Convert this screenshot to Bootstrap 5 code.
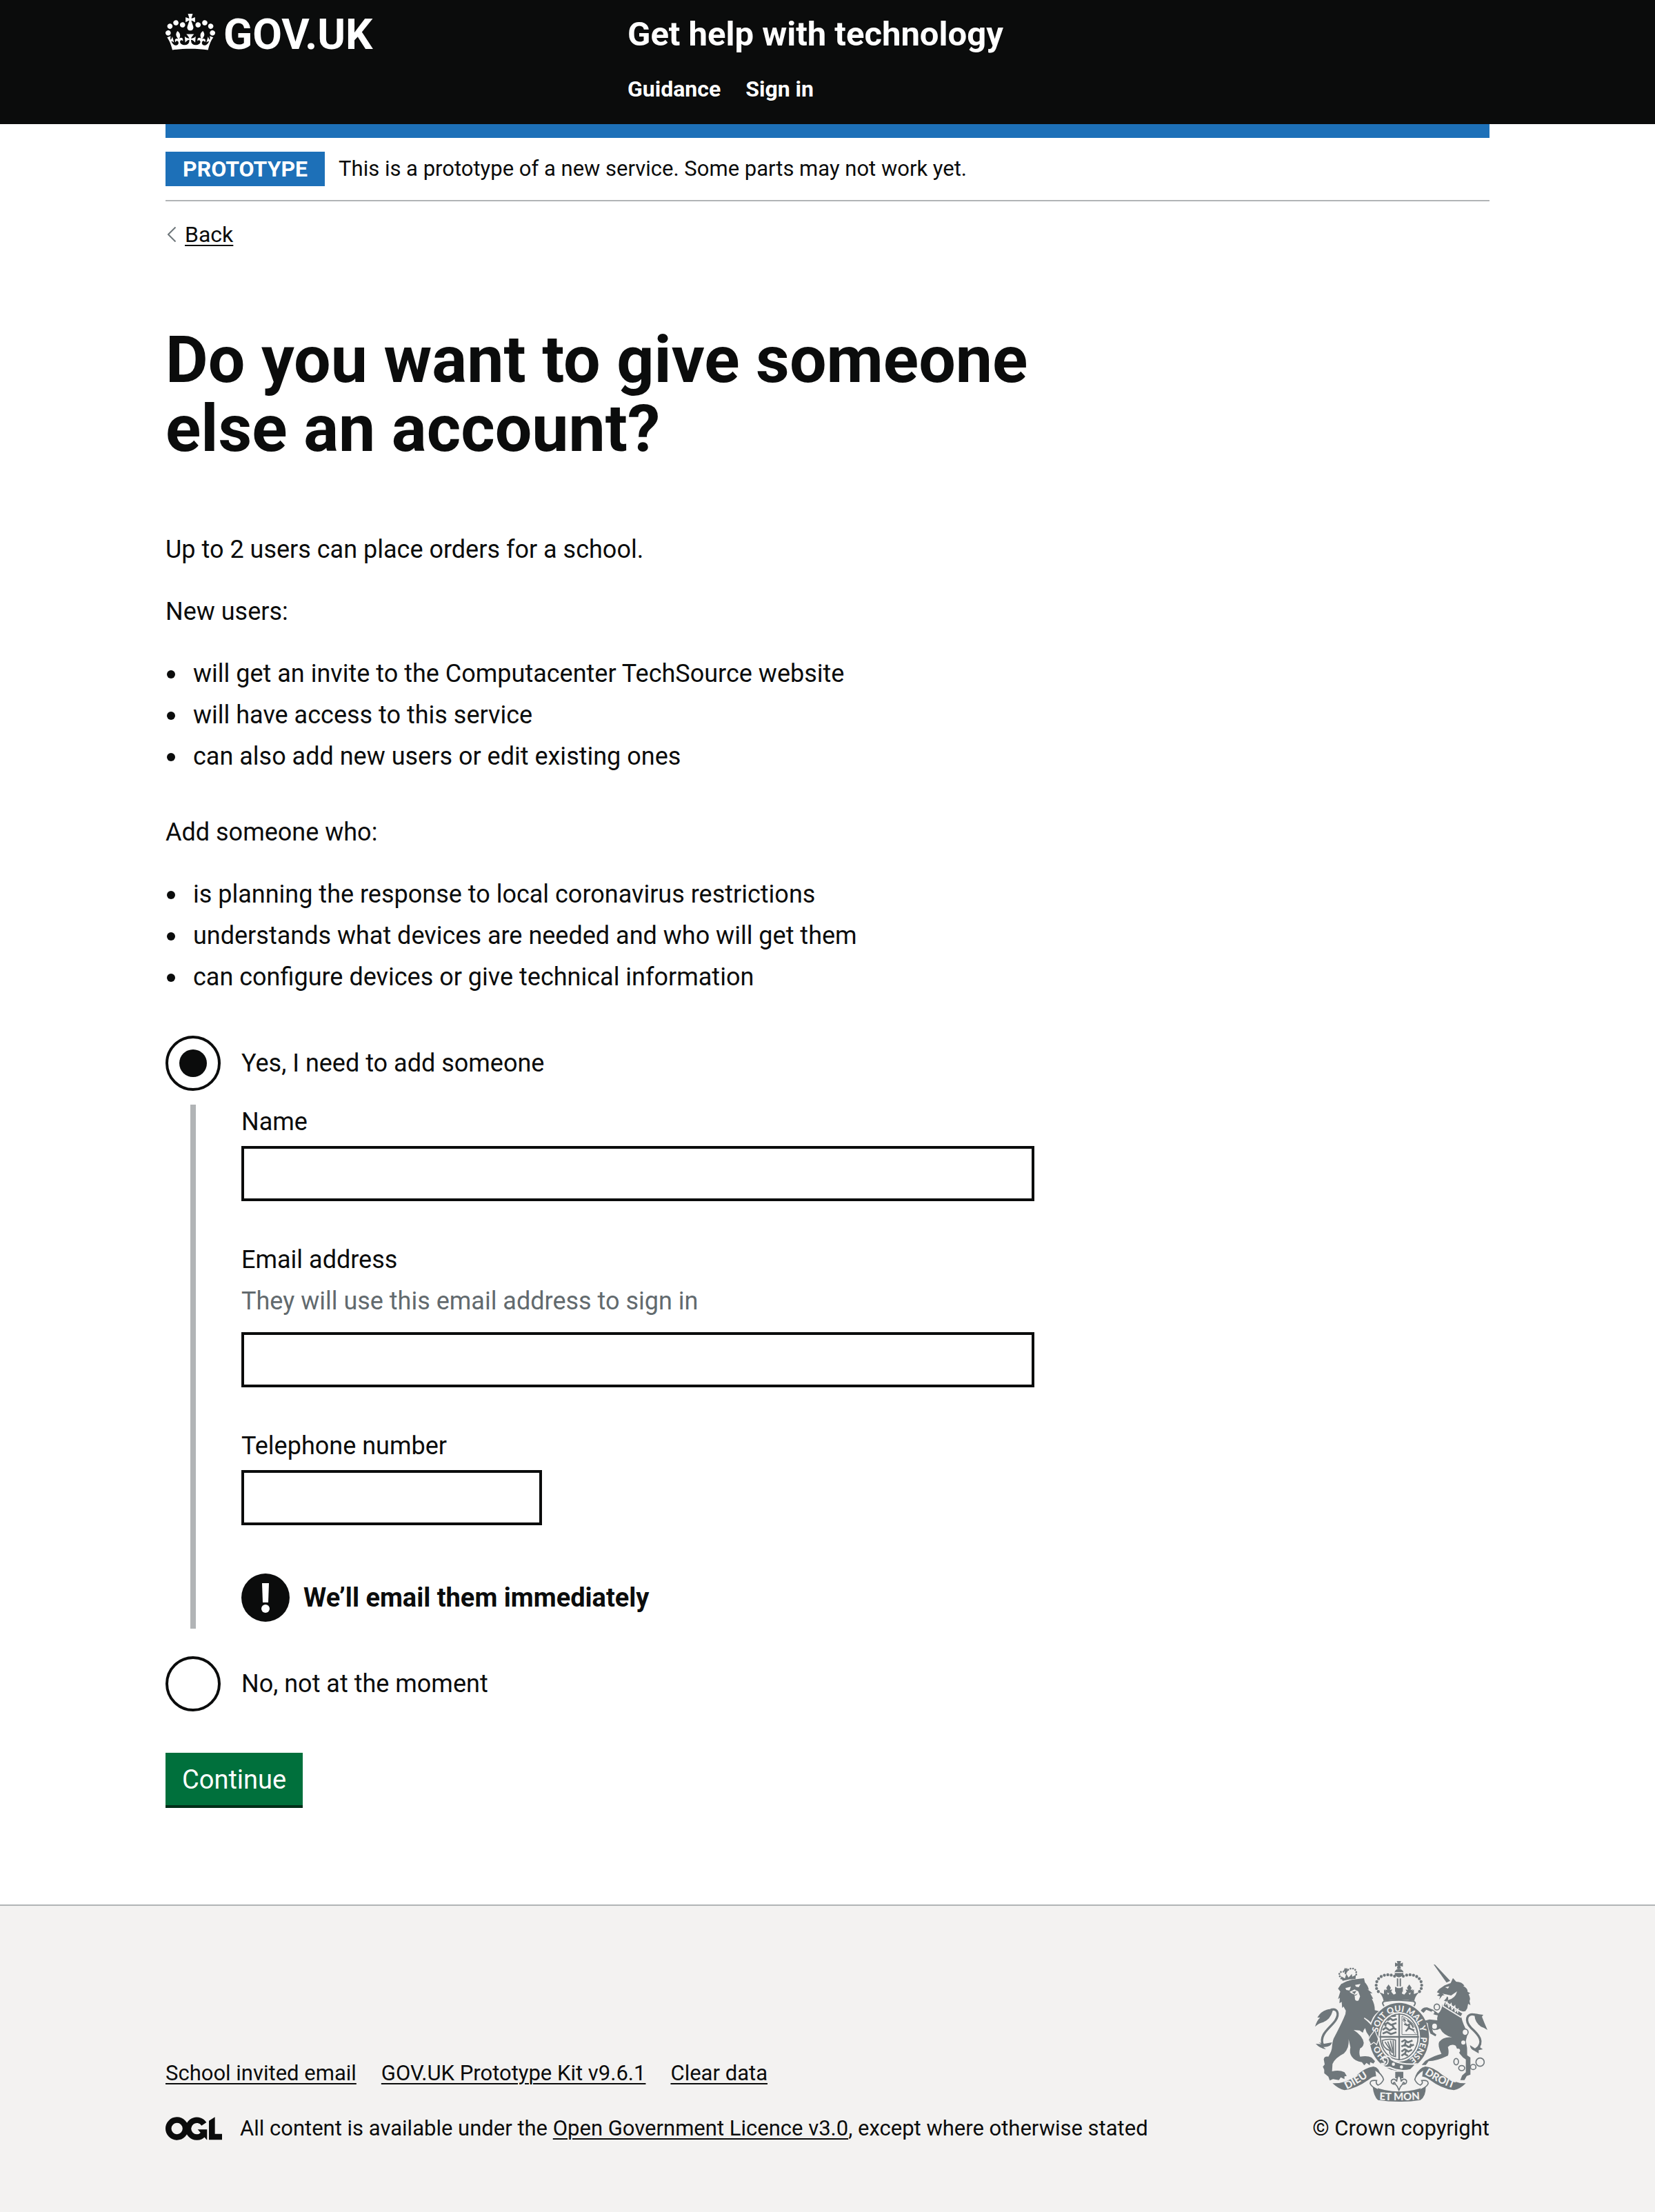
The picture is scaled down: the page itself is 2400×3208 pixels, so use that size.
<!DOCTYPE html>
<html lang="en">
<head>
<meta charset="utf-8">
<meta name="viewport" content="width=device-width, initial-scale=1">
<title>Do you want to give someone else an account? - Get help with technology</title>
<link href="https://cdn.jsdelivr.net/npm/bootstrap@5.3.0/dist/css/bootstrap.min.css" rel="stylesheet">
<style>
:root { --ink: #0b0c0c; --line: #b1b4b6; --brand: #1d70b8; --crest: #6f777b; --paper: #f3f2f1; }
body { font-family: Roboto, "Liberation Sans", sans-serif; font-size: 36px; line-height: 50px; color: var(--ink); background: var(--paper); }
a { color: var(--ink); text-underline-offset: 4px; text-decoration-thickness: 2px; }
a:hover { color: #003078; }
.page-width { width: 80%; margin-inline: auto; }
.small-type { font-size: 31px; line-height: 40px; }
.nav-type { font-size: 32px; line-height: 40px; }
.site-header { background: var(--ink); padding: 20px 0 31px; }
.site-header a { color: #fff; text-decoration: none; }
.logo-link { font-size: 62px; line-height: 60px; gap: 12px; }
.service-col { padding-left: 30px; }
.service-name { font-size: 49px; line-height: 60px; }
.site-nav { margin-top: 29px; gap: 36px; }
.brand-bar { height: 20px; background: var(--brand); }
.phase-banner { padding: 20px 0; gap: 20px; border-bottom: 2px solid var(--line); }
.phase-tag { background: var(--brand); padding: 5px 25px; }
.back-link { margin-top: 28px; gap: 13px; padding-left: 3px; }
.main-row { --bs-gutter-x: 60px; }
h1 { font-size: 95px; line-height: 100px; margin: 112px 0 100px; }
main p { margin-bottom: 40px; }
.bullets { margin-bottom: 60px; }
.bullets li { display: flex; margin-bottom: 10px; }
.bullets li::before { content: ""; flex: none; width: 12px; height: 12px; margin: 20px 26px 0 2px; border-radius: 50%; background: var(--ink); }
.bullets li:last-child { margin-bottom: 0; }
.choice { gap: 30px; }
.choice .form-check-input { width: 80px; height: 80px; margin: 0; flex: none; border: 4px solid var(--ink); background-color: #fff; }
.choice .form-check-input:checked { background-color: #fff; background-size: contain; background-image: url("data:image/svg+xml,%3Csvg xmlns='http://www.w3.org/2000/svg' viewBox='0 0 72 72'%3E%3Ccircle cx='36' cy='36' r='20' fill='%230b0c0c'/%3E%3C/svg%3E"); }
.conditional { margin: 20px 0 40px 36px; padding-left: 66px; border-left: 8px solid var(--line); }
.field { margin-bottom: 60px; }
.field .form-label { margin-bottom: 10px; }
.field .form-text { font-size: 36px; margin: 0 0 20px; color: #626a6e; }
.field .form-control { height: 80px; border: 4px solid var(--ink); border-radius: 0; font-size: 36px; padding: 10px; }
.field .tel-input { width: 436px; }
.warning-text { padding: 10px 0; gap: 20px; font-size: 38px; }
.btn-continue { --bs-btn-color: #fff; --bs-btn-bg: #00703c; --bs-btn-hover-color: #fff; --bs-btn-hover-bg: #005a30; margin-top: 60px; padding: 14px 24px 12px; border: 0; border-radius: 0; font-size: 38px; line-height: 50px; box-shadow: 0 4px 0 #002d18; }
.page-main { padding-bottom: 144px; }
.site-footer { border-top: 2px solid var(--line); padding: 80px 0 100px; }
.footer-links { gap: 36px; margin-bottom: 40px; }
.licence { gap: 26px; }
.crest-link { text-decoration: none; gap: 19px; }
.crest-word { font-family: Lato, Roboto, sans-serif; font-weight: 900; fill: var(--paper); }
</style>
</head>
<body>
<header class="site-header">
  <div class="page-width">
    <div class="row g-0">
      <div class="col-4">
        <a href="#" class="logo-link d-inline-flex align-items-start fw-bold">
          <svg width="72" height="53" viewBox="0 0 132 97" aria-hidden="true"><path fill="#fff" fill-rule="evenodd" d="M25 30.2c3.5 1.5 7.7-.2 9.1-3.7 1.5-3.6-.2-7.8-3.9-9.2-3.6-1.4-7.6.3-9.1 3.9-1.4 3.5.3 7.5 3.9 9zM9 39.5c3.6 1.5 7.8-.2 9.2-3.7 1.5-3.6-.2-7.8-3.9-9.1-3.6-1.5-7.6.2-9.1 3.8-1.4 3.5.3 7.5 3.8 9zM4.4 57.2c3.5 1.5 7.7-.2 9.1-3.8 1.5-3.6-.2-7.7-3.9-9.1-3.5-1.5-7.6.3-9.1 3.8-1.4 3.5.3 7.6 3.9 9.1zm38.3-21.4c3.5 1.5 7.7-.2 9.1-3.8 1.5-3.6-.2-7.7-3.9-9.1-3.6-1.5-7.6.3-9.1 3.8-1.3 3.6.4 7.7 3.9 9.1zm64.4-5.6c-3.6 1.5-7.8-.2-9.1-3.7-1.5-3.6.2-7.8 3.8-9.2 3.6-1.4 7.7.3 9.2 3.9 1.3 3.5-.4 7.5-3.9 9zm15.9 9.3c-3.6 1.5-7.7-.2-9.1-3.7-1.5-3.6.2-7.8 3.7-9.1 3.6-1.5 7.7.2 9.2 3.8 1.5 3.5-.3 7.5-3.8 9zm4.7 17.7c-3.6 1.5-7.8-.2-9.2-3.8-1.5-3.6.2-7.7 3.9-9.1 3.6-1.5 7.7.3 9.2 3.8 1.3 3.5-.4 7.6-3.9 9.1zM89.3 35.8c-3.6 1.5-7.8-.2-9.2-3.8-1.4-3.6.2-7.7 3.9-9.1 3.6-1.5 7.7.3 9.2 3.8 1.4 3.6-.3 7.7-3.9 9.1zM69.7 17.7l8.9 4.7V9.3l-8.9 2.8c-.2-.3-.5-.6-.9-.9L72.4 0H59.6l3.5 11.2c-.3.3-.6.5-.9.9l-8.8-2.8v13.1l8.8-4.7c.3.3.6.7.9.9l-5 15.4v.1c-.2.8-.4 1.6-.4 2.4 0 4.1 3.1 7.5 7 8.1h.2c.3 0 .7.1 1 .1.4 0 .7 0 1-.1h.2c4-.6 7.1-4.1 7.1-8.1 0-.8-.1-1.7-.4-2.4V34l-5.1-15.4c.4-.2.7-.6 1-.9zM66 92.8c16.9 0 32.8 1.1 47.1 3.2 4-16.9 8.9-26.7 14-33.5l-9.6-3.4c1 4.9 1.1 7.2 0 10.2-1.5-1.4-3-4.3-4.2-8.7L108.6 76c2.8-2 5-3.2 7.5-3.3-4.4 9.4-10 11.9-13.6 11.2-4.3-.8-6.3-4.6-5.6-7.9 1-4.7 5.7-5.9 8-.5 4.3-8.7-3-11.4-7.6-8.8 7.1-7.2 7.9-13.5 2.1-21.1-8 6.1-8.1 12.3-4.5 20.8-4.7-5.4-12.1-2.5-9.5 6.2 3.4-5.2 7.9-2 7.2 3.1-.6 4.3-6.4 7.8-13.5 7.2-10.3-.9-10.9-8-11.2-13.8 2.5-.5 7.1 1.8 11 7.3L80.2 60c-4.1 4.4-8 5.3-12.3 5.4 1.4-4.4 8-11.6 8-11.6H55.5s6.4 7.2 7.9 11.6c-4.2-.1-8-1-12.3-5.4l1.4 16.4c3.9-5.5 8.5-7.7 10.9-7.3-.3 5.8-.9 12.8-11.1 13.8-7.2.6-12.9-2.9-13.5-7.2-.7-5 3.8-8.3 7.1-3.1 2.7-8.7-4.6-11.6-9.4-6.2 3.7-8.5 3.6-14.7-4.6-20.8-5.8 7.6-5 13.9 2.2 21.1-4.7-2.6-11.9.1-7.7 8.8 2.3-5.5 7.1-4.2 8.1.5.7 3.3-1.3 7.1-5.7 7.9-3.5.7-9-1.8-13.5-11.2 2.5.1 4.7 1.3 7.5 3.3l-4.7-15.4c-1.2 4.4-2.7 7.2-4.3 8.7-1.1-3-.9-5.3 0-10.2l-9.5 3.4c5 6.9 9.9 16.7 14 33.5 14.8-2.1 30.8-3.2 47.7-3.2z"/></svg>
          <span>GOV.UK</span>
        </a>
      </div>
      <div class="col-8 service-col">
        <a href="#" class="service-name d-block fw-bold">Get help with technology</a>
        <nav class="site-nav nav-type fw-bold d-flex" aria-label="Service">
          <a href="#">Guidance</a>
          <a href="#">Sign in</a>
        </nav>
      </div>
    </div>
  </div>
</header>

<div class="page-main bg-white">
  <div class="page-width">
    <div class="brand-bar"></div>
    <div class="phase-banner small-type d-flex align-items-center">
      <strong class="phase-tag nav-type text-white">PROTOTYPE</strong>
      <span>This is a prototype of a new service. Some parts may not work yet.</span>
    </div>
    <div class="back-link nav-type d-flex align-items-center">
      <svg width="12" height="22" viewBox="0 0 12 22" aria-hidden="true"><path d="M11.5 .5 1 11l10.500 10.500" fill="none" stroke="#6f777b" stroke-width="2"/></svg>
      <a href="#">Back</a>
    </div>

    <main class="row main-row">
      <div class="col-8">
        <h1 class="fw-bold">Do you want to give someone else an account?</h1>
        <p>Up to 2 users can place orders for a school.</p>
        <p>New users:</p>
        <ul class="bullets list-unstyled">
          <li>will get an invite to the Computacenter TechSource website</li>
          <li>will have access to this service</li>
          <li>can also add new users or edit existing ones</li>
        </ul>
        <p>Add someone who:</p>
        <ul class="bullets list-unstyled">
          <li>is planning the response to local coronavirus restrictions</li>
          <li>understands what devices are needed and who will get them</li>
          <li>can configure devices or give technical information</li>
        </ul>

        <form>
          <div class="choice d-flex align-items-center">
            <input class="form-check-input" type="radio" name="add-user" id="add-yes" checked>
            <label for="add-yes">Yes, I need to add someone</label>
          </div>
          <div class="conditional">
            <div class="field">
              <label class="form-label d-block" for="full-name">Name</label>
              <input class="form-control" type="text" id="full-name">
            </div>
            <div class="field">
              <label class="form-label d-block" for="email">Email address</label>
              <div class="form-text" id="email-hint">They will use this email address to sign in</div>
              <input class="form-control" type="email" id="email" aria-describedby="email-hint">
            </div>
            <div class="field">
              <label class="form-label d-block" for="telephone">Telephone number</label>
              <input class="form-control tel-input" type="tel" id="telephone">
            </div>
            <div class="warning-text d-flex align-items-center">
              <svg width="70" height="70" viewBox="0 0 70 70" aria-hidden="true"><circle cx="35" cy="35" r="35" fill="#0b0c0c"/><path d="M30 14h10l-1 28h-8z" fill="#fff"/><circle cx="35" cy="51" r="6" fill="#fff"/></svg>
              <strong>We’ll email them immediately</strong>
            </div>
          </div>
          <div class="choice d-flex align-items-center">
            <input class="form-check-input" type="radio" name="add-user" id="add-no">
            <label for="add-no">No, not at the moment</label>
          </div>
          <button type="submit" class="btn btn-continue d-block">Continue</button>
        </form>
      </div>
    </main>
  </div>
</div>

<footer class="site-footer small-type">
  <div class="page-width d-flex justify-content-between align-items-end">
    <div>
      <div class="footer-links d-flex">
        <a href="#">School invited email</a>
        <a href="#">GOV.UK Prototype Kit v9.6.1</a>
        <a href="#">Clear data</a>
      </div>
      <div class="licence d-flex align-items-center">
        <svg width="82" height="34" viewBox="0 0 483 196" role="img" aria-label="Open Government Licence"><g fill="none" stroke="#0b0c0c" stroke-width="50"><circle cx="98" cy="98" r="73"/><path d="M329 59A73 73 0 1 0 322 147"/></g><path fill="#0b0c0c" d="M275 106h80v88h-3l-77-88zM422 143V0l-51 32v162h112v-51z"/></svg>
        <span>All content is available under the <a href="#">Open Government Licence v3.0</a>, except where otherwise stated</span>
      </div>
    </div>
    <a href="#" class="crest-link d-flex flex-column align-items-center">
      <svg width="250" height="204" viewBox="72 72 750 612" aria-hidden="true">
        <defs>
          <path id="garter" d="M438 512C388 512 344 465 344 402S388 292 438 292 532 339 532 402 488 512 438 512"/>
          <path id="left-scroll" d="M210 630Q262 606 330 556"/>
          <path id="right-scroll" d="M548 564Q610 606 690 632"/>
          <path id="base-scroll" d="M340 675Q438 682 540 673"/>
        </defs>
        <g fill="#6f777b">
          <!-- lion -->
          <path d="M172 192 186 172Q230 150 285 147L289 165Q302 178 306 197L300 195 322 212 312 212 325 236 319 236Q333 262 332 286L350 290Q330 305 322 322L312 345 288 320Q325 350 338 385L346 418 332 428 322 420 316 432 304 418 308 400 296 382 290 364 284 372 280 384 266 374 240 372Q280 398 284 428 282 446 268 452 262 470 268 488 300 482 318 492L333 508 326 518 312 512 310 526 296 515 286 526 276 512Q246 508 232 488 220 472 226 448 222 428 218 412 222 450 198 474 158 494 148 520L146 552Q178 545 200 556L210 572 200 574 200 586 184 578 176 590 150 586 136 592 130 575 112 560 112 545 106 532 114 522 110 500Q112 485 130 488 146 462 146 444 148 415 158 400 184 350 198 318 206 305 206 288L196 270 190 276 188 250 178 256 180 232 172 238 182 205z"/>
          <!-- lion tail -->
          <path d="M72 358Q80 330 94 318L82 318Q96 292 122 284 142 278 150 286 138 328 108 338 88 342 72 358zM75 432 100 434 88 426 112 432 146 426Q140 448 108 446L120 456Q92 452 75 432z"/>
          <path d="M140 284C170 276 180 302 160 332 140 362 88 390 106 438" fill="none" stroke="#6f777b" stroke-width="10"/>
          <!-- lion crown -->
          <path d="M192 158 184 138 202 148 208 128 218 144 232 128 234 140 250 132 248 150Q220 150 192 158z"/>
          <path d="M196 170Q220 156 252 154" fill="none" stroke="#6f777b" stroke-width="5"/>
          <path d="M186 148C160 116 202 112 206 126 210 100 258 92 251 134" fill="none" stroke="#6f777b" stroke-width="8" stroke-linecap="round" stroke-dasharray="0 11"/>
          <path d="M202 101l4 5 5-5 1 8 6 1-4 6-7 0 1 14h-6l-1-13-6-2 4-6z"/>
        </g>
        <g fill="#f3f2f1">
          <path d="M204 190 228 184 222 200 208 198zM246 176 270 172 262 186 250 184zM222 206 244 196 260 204 268 226 262 242Q254 250 246 240L244 218 230 212z"/>
          <path d="M286 320Q320 340 334 372L344 396 330 366Q316 344 286 320z" stroke="#f3f2f1" stroke-width="4"/>
        </g>
        <path d="M232 206l20-4-8 14zM240 222l18-8-8 8z" fill="#6f777b"/>
        <!-- crown -->
        <g fill="#6f777b">
          <path d="M352 208 372 216 372 196 384 206 390 220 400 202 414 218 424 214 420 192H454L450 214 460 218 474 202 484 220 490 206 502 196 502 216 524 208Q506 228 504 246 437 234 370 246 368 228 352 208z"/>
          <path d="M392 174l10 14-4 10 10-2-6 12-10 4-10-4-6-12 10 2-4-10zM482 174l10 14-4 10 10-2-6 12-10 4-10-4-6-12 10 2-4-10z"/>
          <path d="M428 72h18l-3 11 11-4v18l-11-4 3 12h-18l3-12-11 4V79l11 4zM419 118Q424 107 437 105 450 107 456 118V132Q437 154 419 132zM428 148h6v34h-6zM440 148h6v34h-6z"/>
          <path d="M420 184l12 6h10l12-6v22l-12-5-5 8-5-8-12 5z"/>
          <path d="M418 138C386 124 350 134 340 164 334 190 342 200 356 214M456 138C488 124 524 134 534 164 540 190 532 200 518 214" fill="none" stroke="#6f777b" stroke-width="13" stroke-linecap="round" stroke-dasharray="0 15"/>
          <path d="M372 268Q358 250 378 247 437 238 496 247 516 250 502 268" fill="none" stroke="#6f777b" stroke-width="6"/>
          <path d="M419 122h36" stroke="#f3f2f1" stroke-width="4"/>
        </g>
        <!-- garter and shield -->
        <ellipse cx="438" cy="402" rx="130" ry="148" fill="#6f777b"/>
        <ellipse cx="438" cy="402" rx="91" ry="108" fill="#f3f2f1"/>
        <ellipse cx="438" cy="402" rx="82" ry="99" fill="#f3f2f1" stroke="#6f777b" stroke-width="5"/>
        <path d="M438 300v204M352 402h172" stroke="#6f777b" stroke-width="7"/>
        <g fill="none" stroke="#6f777b" stroke-width="8" stroke-linejoin="round">
          <path d="M386 330l14-8 10 8 18-6M376 350l12-10 14 10 24-8M374 342l6 14M366 372l14-10 16 12 18-10 12 6M366 388l18-8 18 10 24-8M404 312l20-2M408 352l8 12"/>
          <path d="M448 424l14-8 14 10 20-8M448 444l16-8 14 10 24-10M448 466l14-10 16 10 16-8M448 484l12-8 16 8M466 424l-4 20M490 432l-6 18M470 456l-6 18"/>
          <path d="M460 346l14 6 14-8M474 330l16 14 10 18M466 378l14-14 24 10M484 352l-10 18M456 322l10 12" stroke-width="7"/>
        </g>
        <path d="M450 312v80h68Q512 338 450 312M452 328l58 60" fill="none" stroke="#6f777b" stroke-width="3"/>
        <path d="M364 418Q392 408 422 416V488Q392 482 398 462 366 452 364 418zM376 424l26 38M388 422l20 50M400 418l14 58M412 418l2 64" fill="none" stroke="#6f777b" stroke-width="5"/>
        <g class="crest-word" font-size="37">
          <text><textPath href="#garter" startOffset="10%">HO</textPath></text>
          <text><textPath href="#garter" startOffset="28%">SOIT QUI MAL Y</textPath></text>
          <text><textPath href="#garter" startOffset="75%">PENSE</textPath></text>
        </g>
        <path d="M304 414 314 436 328 426 340 436 348 412 332 372 314 396z" fill="#6f777b" stroke="#f3f2f1" stroke-width="4"/>
        <path d="M370 492Q396 478 404 500 440 524 512 520L488 545Q440 556 396 534 370 540 362 518 376 520 378 510 362 506 370 492z" fill="#6f777b" stroke="#f3f2f1" stroke-width="6"/>
        <path d="M374 494Q392 490 390 510 386 530 368 522" fill="none" stroke="#f3f2f1" stroke-width="5"/>
        <circle cx="413" cy="521" r="7" fill="#f3f2f1"/><circle cx="448" cy="533" r="7" fill="#f3f2f1"/>
        <!-- unicorn -->
        <g fill="#6f777b">
          <path d="M588 87 594 88 660 158 644 166z"/>
          <path d="M602 208 612 194 636 178 662 168 672 146 686 162Q712 162 722 180L716 180Q738 192 736 206L748 212 740 216Q750 236 744 246L748 264 738 258 734 278 726 290 716 292Q690 286 676 270L632 246Q650 228 646 218L626 222 612 240 616 226 602 222 614 214z"/>
          <path d="M626 262 634 268 708 314Q716 350 736 382 734 400 728 420 736 450 734 482L748 492V566L732 572 722 590H704L712 570 728 556V500Q700 484 684 440 664 430 650 446 656 470 650 484 600 508 566 508L554 524H536L552 506Q592 482 622 476 604 440 612 424 630 400 668 404 632 396 616 366L602 372 578 356 586 382 600 392 596 400 574 388 566 366 562 342 542 334 570 326 604 330Q602 320 606 308 580 306 576 292L556 284 544 298 532 288Q540 272 560 274L586 284 608 300Q622 290 626 262z"/>
          <path d="M742 306Q764 296 786 304L804 306 798 314Q808 340 822 372 806 362 794 358 768 340 766 310zM746 438 768 452 794 432 790 448 802 456 784 460 784 474 764 462Q748 456 746 438z"/>
          <path d="M768 306C728 296 724 334 750 362 786 394 810 424 774 456" fill="none" stroke="#6f777b" stroke-width="10"/>
        </g>
        <path d="M636 248 716 300 706 316 628 268z" fill="#6f777b" stroke="#f3f2f1" stroke-width="5"/>
        <path d="M640 262l6-12 8 22 10-14 4 24 12-14 2 24 12-10-2 16" fill="none" stroke="#f3f2f1" stroke-width="5"/>
        <path d="M638 186l18-4-6 10zM626 214 664 222 690 204Q682 236 650 242 656 226 640 224z" fill="#f3f2f1"/>
        <g fill="none" stroke="#6f777b" stroke-width="5">
          <ellipse cx="602" cy="272" rx="12" ry="13"/><ellipse cx="592" cy="356" rx="13" ry="14" fill="#f3f2f1"/><ellipse cx="725" cy="382" rx="13" ry="14" fill="#f3f2f1"/><ellipse cx="686" cy="510" rx="10" ry="14"/><ellipse cx="710" cy="538" rx="13" ry="11"/><ellipse cx="760" cy="533" rx="12" ry="11"/><circle cx="790" cy="512" r="18"/>
        </g>
        <circle cx="717" cy="427" r="9" fill="#f3f2f1"/><circle cx="694" cy="462" r="9" fill="#f3f2f1"/><circle cx="584" cy="296" r="7" fill="#f3f2f1"/>
        <!-- motto scrolls -->
        <g fill="#6f777b">
          <path d="M148 604Q204 606 250 572 288 536 326 531 352 534 358 574L336 574Q318 576 306 588 250 628 200 634 176 630 148 604z"/>
          <path d="M728 604Q676 606 626 568 586 532 552 531 524 536 508 574L530 574Q556 576 570 588 622 628 676 634 702 630 728 604z"/>
          <path d="M322 616Q374 640 438 640 504 640 554 616 554 664 530 677 486 684 438 684 390 684 346 677 328 664 322 616z"/>
          <path d="M421 554h35v28h-35z"/>
        </g>
        <path d="M334 546Q366 566 370 588 362 606 346 612 334 604 340 592 310 588 312 606 318 620 346 632M542 546Q510 566 506 588 514 606 530 612 544 604 536 592 566 588 564 606 558 620 530 632" fill="#f3f2f1" stroke="#6f777b" stroke-width="5"/>
        <path d="M437 570Q448 580 446 596 458 578 470 592 472 608 458 608 464 600 456 600 450 614 444 618L437 634 430 618Q424 614 418 600 410 600 416 608 402 608 404 592 416 578 428 596 426 580 437 570z" fill="#f3f2f1" stroke="#6f777b" stroke-width="5"/>
        <g class="crest-word" font-size="45">
          <text><textPath href="#left-scroll">DIEU</textPath></text>
          <text><textPath href="#right-scroll">DROIT</textPath></text>
          <text><textPath href="#base-scroll" startOffset="50%" text-anchor="middle">ET MON</textPath></text>
        </g>
      </svg>
      <span>© Crown copyright</span>
    </a>
  </div>
</footer>
<script src="https://cdn.jsdelivr.net/npm/bootstrap@5.3.0/dist/js/bootstrap.bundle.min.js"></script>
</body>
</html>
